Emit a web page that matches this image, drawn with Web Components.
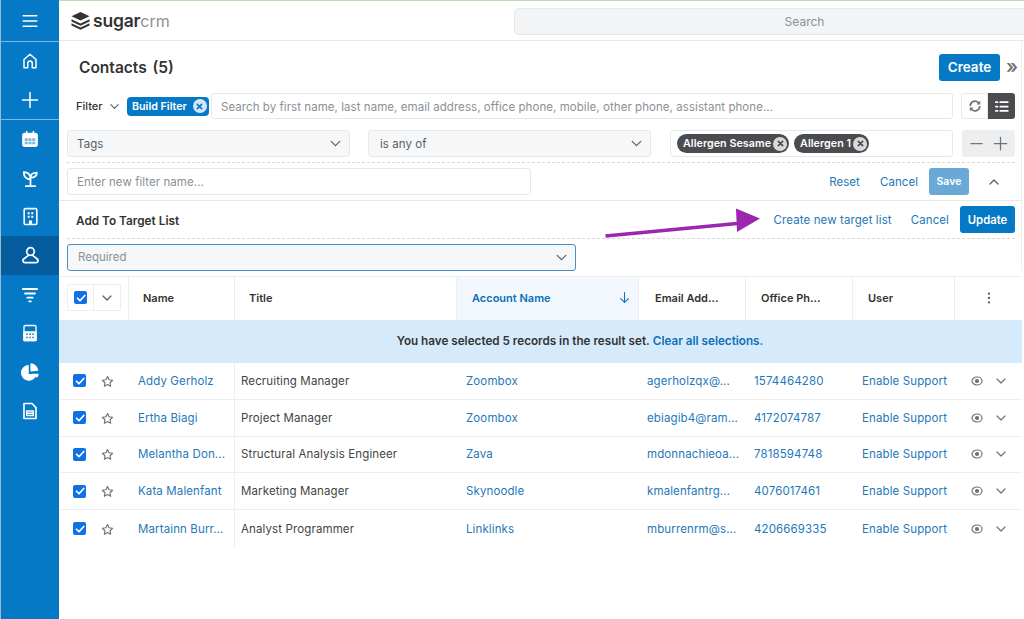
<!DOCTYPE html>
<html>
<head>
<meta charset="utf-8">
<title>Contacts</title>
<style>
html, body { margin: 0; height: 100%; overflow: hidden; background: #fff; font-family: Inter, "Liberation Sans", sans-serif; color: #333; }
body { position: relative; display: flex; height: 619px; }
sugar-main { flex: 1; min-width: 0; }
</style>
</head>
<body>
<sugar-sidebar></sugar-sidebar>
<sugar-main>
  <sugar-topbar></sugar-topbar>
  <sugar-heading>Contacts (5)</sugar-heading>
  <sugar-filter></sugar-filter>
  <sugar-target></sugar-target>
  <sugar-table>
    <contact-row name="Addy Gerholz" job="Recruiting Manager" account="Zoombox" email="agerholzqx@..." phone="1574464280"></contact-row>
    <contact-row name="Ertha Biagi" job="Project Manager" account="Zoombox" email="ebiagib4@ram..." phone="4172074787"></contact-row>
    <contact-row name="Melantha Don..." job="Structural Analysis Engineer" account="Zava" email="mdonnachieoa..." phone="7818594748"></contact-row>
    <contact-row name="Kata Malenfant" job="Marketing Manager" account="Skynoodle" email="kmalenfantrg..." phone="4076017461"></contact-row>
    <contact-row name="Martainn Burr..." job="Analyst Programmer" account="Linklinks" email="mburrenrm@s..." phone="4206669335"></contact-row>
  </sugar-table>
</sugar-main>
<sugar-arrow></sugar-arrow>

<script>
// shared icon paths, 24x24 box
const ICONS = {
  menu: '<path d="M3 5h18M3 12h18M3 19h18"/>',
  home: '<path d="M4 21V10l8-7 8 7v11h-5v-6a3 3 0 0 0-6 0v6z"/>',
  plus: '<path d="M12 2v20M2 12h20"/>',
  calendar: '<rect x="2.500" y="4.500" width="19" height="17" rx="2.500" fill="currentColor"/><path d="M7.500 2v3M16.500 2v3"/><path d="M5 11h4v3.500H5zm5 0h4v3.500h-4zm5 0h4v3.500h-4zM5 15.500h4V19H5zm5 0h4V19h-4zm5 0h4V19h-4z" fill="#7db8e2" stroke="none"/>',
  plant: '<path d="M12 12v9M6 21.500h12M12 13C6.500 13 3.500 9.500 3.500 4 9 4 12 7.500 12 13zM12 11c0-4 3-6.500 8-6.500 0 4-3 6.500-8 6.500z"/>',
  building: '<rect x="4" y="2" width="16" height="20" rx="1.500"/><path d="M8.500 6.500h2.500V9H8.500zm4.500 0h2.500V9H13zm-4.500 4.500h2.500v2.500H8.500zm4.500 0h2.500v2.500H13zM10 22v-5h4v5z" fill="currentColor" stroke="none"/>',
  person: '<circle cx="12" cy="7" r="4.800"/><path d="M9 12c-1 2.200-6.500 3-6.500 6.500A2.500 2.500 0 0 0 5 21h14a2.500 2.500 0 0 0 2.500-2.500c0-3.500-5.500-4.300-6.500-6.500"/>',
  funnel: '<path d="M2.500 4h19M5.500 10h13M8.500 15.500h7M11 20.500h2"/>',
  calc: '<rect x="4" y="2" width="16" height="20" rx="1.500"/><path d="M4 10.500h16V22H4z" fill="currentColor"/><path d="M7 13.500h2M11 13.500h2M15 13.500h2M7 18h2M11 18h2M15 18h2" stroke="#0679c6" stroke-width="2" stroke-linecap="butt"/>',
  pie: '<path d="M10.500 3.500a9.500 9.500 0 1 0 9.500 11h-9.500z" fill="currentColor" stroke="none"/><path d="M12.500 1.500a9.800 9.800 0 0 1 9.500 9l-9.500 1z" fill="currentColor" stroke="none"/><path d="M14 14h8.500a9 9 0 0 1-2 5z" fill="currentColor" stroke="none"/>',
  doc: '<path d="M4 2h10.500L20 7.500V22H4z"/><path d="M7.500 12h9v6h-9zM7.500 15h9" stroke-width="1.800"/>',
  chevron: '<path d="M4 8l8 8 8-8"/>',
  chevronUp: '<path d="M4 16l8-8 8 8"/>',
  refresh: '<path d="M4 11a8 8 0 0 1 14-4.500M20 13a8 8 0 0 1-14 4.500"/><path d="M21 3v6.500h-6.500zM3 21v-6.500h6.500z" fill="currentColor" stroke="none"/>',
  list: '<path d="M10 5h12M10 12h12M10 19h12M3 5h2.500M3 12h2.500M3 19h2.500"/>',
  minus: '<path d="M3 12h18"/>',
  down: '<path d="M12 3v18M5 14l7 7 7-7"/>',
  dots: '<circle cx="12" cy="4.500" r="2" fill="currentColor" stroke="none"/><circle cx="12" cy="12" r="2" fill="currentColor" stroke="none"/><circle cx="12" cy="19.500" r="2" fill="currentColor" stroke="none"/>',
  star: '<path d="M12 2.800l2.900 6 6.500.9-4.700 4.600 1.100 6.500-5.800-3.100-5.800 3.100 1.100-6.500-4.700-4.600 6.500-.9z"/>',
  eye: '<ellipse cx="12" cy="12" rx="10" ry="8"/><circle cx="12" cy="12" r="3" fill="currentColor"/>',
  check: '<path d="M5 12.500l5 5L19.500 7"/>',
  close: '<path d="M8 8l8 8M16 8l-8 8"/>'
};

class SugarIcon extends HTMLElement {
  connectedCallback() {
    const size = this.getAttribute('size') || 16;
    const sw = this.getAttribute('sw') || 2;
    this.attachShadow({ mode: 'open' }).innerHTML = `
      <style>:host { display: inline-flex; line-height: 0; flex: none; } svg { display: block; }</style>
      <svg width="${size}" height="${size}" viewBox="0 0 24 24" fill="none" stroke="currentColor"
        stroke-width="${sw}" stroke-linecap="round" stroke-linejoin="round">${ICONS[this.getAttribute('name')] || ''}</svg>`;
  }
}
customElements.define('sugar-icon', SugarIcon);

class SugarCheck extends HTMLElement {
  connectedCallback() {
    this.attachShadow({ mode: 'open' }).innerHTML = `
      <style>
        :host { display: flex; width: 13px; height: 13px; border-radius: 2px; background: #1070e6; color: #fff;
          align-items: center; justify-content: center; flex: none; }
      </style>
      <sugar-icon name="check" size="12" sw="3.400"></sugar-icon>`;
  }
}
customElements.define('sugar-check', SugarCheck);

class SugarSidebar extends HTMLElement {
  connectedCallback() {
    const item = (n, cls = '', size = 19, sw = 2) =>
      `<div class="item ${cls}"><sugar-icon name="${n}" size="${size}" sw="${sw}"></sugar-icon></div>`;
    this.attachShadow({ mode: 'open' }).innerHTML = `
      <style>
        :host { display: block; width: 58px; height: 619px; flex: none; background: #0679c6; color: #fff;
          border-left: 1px solid #9db9ce; }
        .top { height: 41px; display: flex; align-items: center; justify-content: center; border-bottom: 1px solid #7db8e2; }
        .create { height: 77px; border-bottom: 1px solid #7db8e2; }
        .item { height: 38.800px; display: flex; align-items: center; justify-content: center; }
        .active { background: #045c9f; }
      </style>
      <div class="top"><sugar-icon name="menu" size="18" sw="2"></sugar-icon></div>
      <div class="create">${item('home', '', 18)}${item('plus', '', 18)}</div>
      <div>
        ${item('calendar', '', 18)}${item('plant', '', 19, 2.200)}${item('building', '', 19)}
        ${item('person', 'active', 19, 2.200)}${item('funnel', '', 18, 2.600)}${item('calc', '', 18, 1.800)}
        ${item('pie', '', 20)}${item('doc', '', 18, 2.200)}
      </div>`;
  }
}
customElements.define('sugar-sidebar', SugarSidebar);

class SugarTopbar extends HTMLElement {
  connectedCallback() {
    this.attachShadow({ mode: 'open' }).innerHTML = `
      <style>
        :host { display: flex; height: 41px; box-sizing: border-box; align-items: center; justify-content: space-between;
          border-top: 1px solid #bcdcb4; border-bottom: 1px solid #e6e8ea; padding-left: 12px; }
        .logo { display: flex; align-items: center; gap: 3px; color: #333; }
        .logo b { font-size: 17.500px; font-weight: 600; letter-spacing: -.2px; }
        .logo span { font-size: 16px; color: #8b9095; font-weight: 400; }
        .search { width: 510px; height: 27px; background: #f3f4f5; border: 1px solid #e6e8ea; border-radius: 5px 0 0 5px;
          border-right: 0; box-sizing: border-box; display: flex; align-items: center; justify-content: center;
          font-size: 12px; color: #8b9095; margin-top: 1px; padding-left: 70px; }
      </style>
      <div class="logo">
        <svg width="19" height="19" viewBox="0 0 19 19"><path d="M9.500 1l9 4.200-9 4.200-9-4.200z" fill="#333"/><path d="M.5 8.200l9 4.200 9-4.200v2.300l-9 4.200-9-4.200z" fill="#333"/><path d="M.5 12.300l9 4.200 9-4.200v2.300l-9 4.200-9-4.200z" fill="#333"/></svg>
        <div><b>sugar</b><span>crm</span></div>
      </div>
      <div class="search">Search</div>`;
  }
}
customElements.define('sugar-topbar', SugarTopbar);

class SugarHeading extends HTMLElement {
  connectedCallback() {
    this.attachShadow({ mode: 'open' }).innerHTML = `
      <style>
        :host { display: flex; height: 52px; box-sizing: border-box; align-items: center; justify-content: space-between;
          padding: 0 3px 0 20px; border-right: 1px solid #eceeef; width: 963px; }
        h1 { margin: 0; font-size: 15.500px; font-weight: 600; color: #333; word-spacing: 2px; }
        .right { display: flex; align-items: center; gap: 6px; }
        .create { width: 61px; height: 27px; background: #0679c6; color: #fff; border-radius: 3px; font-size: 13.500px;
          font-weight: 600; display: flex; align-items: center; justify-content: center; }
        .more { color: #6f7478; font-size: 19px; font-weight: 600; line-height: 1; width: 12px; margin-top: -2px; }
      </style>
      <h1><slot></slot></h1>
      <div class="right"><div class="create">Create</div><div class="more">»</div></div>`;
  }
}
customElements.define('sugar-heading', SugarHeading);

class SugarPill extends HTMLElement {
  connectedCallback() {
    this.attachShadow({ mode: 'open' }).innerHTML = `
      <style>
        :host { display: inline-flex; align-items: center; gap: var(--pill-gap, 2px); height: 19px; box-sizing: border-box;
          padding: 0 2px 0 var(--pill-pad, 6px); background: var(--pill-bg, #4a4c50); color: #fff; border-radius: 10px;
          font-size: 10.700px; font-weight: 600; white-space: nowrap; }
        .x { width: 14px; height: 14px; border-radius: 50%; background: var(--x-bg, #d8dadc); color: var(--pill-bg, #4a4c50);
          display: flex; align-items: center; justify-content: center; }
      </style>
      <slot></slot><span class="x"><sugar-icon name="close" size="13" sw="3"></sugar-icon></span>`;
  }
}
customElements.define('sugar-pill', SugarPill);

class SugarFilter extends HTMLElement {
  connectedCallback() {
    this.attachShadow({ mode: 'open' }).innerHTML = `
      <style>
        :host { display: block; width: 963px; box-sizing: border-box; border-right: 1px solid #eceeef; border-bottom: 1px solid #e6e8ea;
          padding: 0 8px; height: 108px; font-size: 11.500px; color: #4a4c50; }
        .row { display: flex; align-items: center; }
        .one { height: 26px; padding-left: 9px; margin-bottom: 11px; }
        .filter { font-size: 11px; font-weight: 500; color: #333; width: 33px; }
        .chev { color: #5a5e62; display: flex; }
        .build { --pill-bg: #0679c6; --x-bg: #d3e8f7; --pill-gap: 6px; --pill-pad: 5px; margin-left: 7px; border-radius: 4px; height: 19px; }
        .box { border: 1px solid #e6e8ea; border-radius: 3px; box-sizing: border-box; display: flex; align-items: center;
          padding: 0 9px; color: #8b9095; background: #fff; white-space: nowrap; overflow: hidden; letter-spacing: .06px; }
        .search { width: 742px; height: 26px; margin-left: auto; padding-top: 1px; }
        .sync { width: 27px; height: 26px; margin-left: 8px; border: 1px solid #e6e8ea; border-radius: 3px 0 0 3px; box-sizing: border-box;
          display: flex; align-items: center; justify-content: center; color: #6f7478; }
        .list { width: 27px; height: 26px; background: #4a4c50; color: #fff; border-radius: 0 3px 3px 0; display: flex; align-items: center; justify-content: center; }
        .two { height: 27px; padding-bottom: 5px; border-bottom: 1px dashed #d5d7d9; width: 948px; }
        .select { background: #f6f7f8; justify-content: space-between; color: #5a5e62; height: 27px; padding-right: 7px; }
        .tags { width: 283px; }
        .op { width: 283px; margin-left: 18px; padding-left: 11px; }
        .pills { width: 283px; margin-left: 19px; padding: 0 6px; gap: 5px; overflow: visible; height: 27px; }
        .plusminus { width: 53px; height: 27px; margin-left: 9px; background: #eceeef; border-radius: 3px; display: flex; align-items: center;
          justify-content: space-around; color: #6f7478; padding: 0 2px; box-sizing: border-box; }
        .three { height: 27px; margin-top: 5px; width: 948px; }
        .name { width: 464px; height: 27px; }
        .actions { margin-left: auto; display: flex; align-items: center; color: #2578b8; letter-spacing: .06px; }
        .actions span { margin-right: 20px; }
        .save { width: 40px; height: 27px; background: #6aa8d8; color: #fff; border-radius: 3px; font-size: 10.500px; font-weight: 600;
          display: flex; align-items: center; justify-content: center; }
        .up { width: 49px; display: flex; justify-content: center; color: #5a5e62; margin-right: -3px; }
      </style>
      <div class="row one" style="width:948px;box-sizing:border-box">
        <span class="filter">Filter</span>
        <span class="chev"><sugar-icon name="chevron" size="11" sw="2.400"></sugar-icon></span>
        <sugar-pill class="build">Build Filter</sugar-pill>
        <div class="box search">Search by first name, last name, email address, office phone, mobile, other phone, assistant phone...</div>
        <div class="sync"><sugar-icon name="refresh" size="14" sw="3"></sugar-icon></div>
        <div class="list"><sugar-icon name="list" size="15" sw="2.800"></sugar-icon></div>
      </div>
      <div class="row two">
        <div class="box select tags">Tags <sugar-icon name="chevron" size="13" sw="2.200"></sugar-icon></div>
        <div class="box select op">is any of <sugar-icon name="chevron" size="13" sw="2.200"></sugar-icon></div>
        <div class="box pills"><sugar-pill>Allergen Sesame</sugar-pill><sugar-pill>Allergen 1</sugar-pill></div>
        <div class="plusminus"><sugar-icon name="minus" size="15"></sugar-icon><sugar-icon name="plus" size="15"></sugar-icon></div>
      </div>
      <div class="row three">
        <div class="box name">Enter new filter name...</div>
        <div class="actions">
          <span>Reset</span><span style="margin-right:11px">Cancel</span>
          <div class="save">Save</div>
          <div class="up"><sugar-icon name="chevronUp" size="12" sw="2.600"></sugar-icon></div>
        </div>
      </div>`;
  }
}
customElements.define('sugar-filter', SugarFilter);

class SugarTarget extends HTMLElement {
  connectedCallback() {
    this.attachShadow({ mode: 'open' }).innerHTML = `
      <style>
        :host { display: block; width: 963px; box-sizing: border-box; border-right: 1px solid #eceeef; padding: 0 6px 0 8px; font-size: 11.500px; }
        .bar { height: 37px; border-bottom: 1px dashed #d5d7d9; display: flex; align-items: center; padding: 0 0 0 9px; }
        b { font-size: 11.800px; font-weight: 600; color: #333; margin-top: 2px; }
        .links { margin-left: auto; display: flex; align-items: center; color: #2578b8; }
        .links span { margin-right: 19px; letter-spacing: .1px; }
        .links span + span { margin-right: 11px; }
        .update { width: 55px; height: 27px; background: #0679c6; color: #fff; border-radius: 3px; font-size: 11.300px; font-weight: 600;
          display: flex; align-items: center; justify-content: center; }
        .req { display: flex; justify-content: space-between; align-items: center; width: 509px; height: 27px; box-sizing: border-box; margin-top: 5px;
          border: 1px solid #4a8fc4; border-radius: 3px; background: #f6f7f8; color: #8b9095; padding: 0 7px 1px 10px; }
        .req sugar-icon { color: #5a5e62; }
      </style>
      <div class="bar">
        <b>Add To Target List</b>
        <div class="links"><span>Create new target list</span><span>Cancel</span><div class="update">Update</div></div>
      </div>
      <div class="req">Required <sugar-icon name="chevron" size="13" sw="2.200"></sugar-icon></div>`;
  }
}
customElements.define('sugar-target', SugarTarget);

const COLS = '70px 106px 222px 182px 107px 107px 102px 67px';

class SugarTable extends HTMLElement {
  connectedCallback() {
    this.attachShadow({ mode: 'open' }).innerHTML = `
      <style>
        :host { display: block; width: 963px; margin-top: 5px; border-top: 1px solid #eceeef; font-size: 12px; }
        .head { display: grid; grid-template-columns: ${COLS}; height: 43px; font-size: 11px; font-weight: 600; color: #333; }
        .head > div { display: flex; align-items: center; padding-left: 9px; padding-bottom: 2px; border-right: 1px solid #eceeef; box-sizing: border-box; min-width: 0; }
        .head .name { padding-left: 14px; }
        .head .title { padding-left: 14px; }
        .head .acct { background: #f2f8fd; color: #0f6fb8; justify-content: space-between; padding: 0 7px 2px 15px; }
        .head .email { padding-left: 16px; }
        .head .phone { padding-left: 15px; }
        .head .user { padding-left: 15px; }
        .head .dots { padding: 0 0 2px; justify-content: center; border-right: 0; color: #5a5e62; }
        .head .sel { padding: 0 0 2px 8px; }
        .group { width: 54px; height: 27px; border: 1px solid #eceeef; border-radius: 2px; box-sizing: border-box; display: flex; align-items: center; }
        .group > div { width: 27px; height: 100%; display: flex; align-items: center; justify-content: center; box-sizing: border-box; }
        .group > div:first-child { border-right: 1px solid #eceeef; }
        .group sugar-icon { color: #5a5e62; }
        .banner { height: 43px; box-sizing: border-box; padding: 0 0 1px 79px; background: #d5eafb; display: flex; align-items: center; justify-content: center;
          font-size: 11.700px; font-weight: 600; color: #333; gap: 3px; white-space: nowrap; }
        .banner span { color: #0f6fb8; }
      </style>
      <div class="head">
        <div class="sel"><div class="group"><div><sugar-check></sugar-check></div><div><sugar-icon name="chevron" size="12" sw="2.400"></sugar-icon></div></div></div>
        <div class="name">Name</div><div class="title">Title</div>
        <div class="acct">Account Name <sugar-icon name="down" size="13" sw="2"></sugar-icon></div>
        <div class="email">Email Add...</div><div class="phone">Office Ph...</div><div class="user">User</div>
        <div class="dots"><sugar-icon name="dots" size="14"></sugar-icon></div>
      </div>
      <div class="banner">You have selected 5 records in the result set. <span>Clear all selections.</span></div>
      <slot></slot>`;
  }
}
customElements.define('sugar-table', SugarTable);

class ContactRow extends HTMLElement {
  connectedCallback() {
    const a = n => this.getAttribute(n);
    this.attachShadow({ mode: 'open' }).innerHTML = `
      <style>
        :host { display: grid; grid-template-columns: ${COLS}; height: 36.800px; box-sizing: border-box; border-bottom: 1px solid #eceeef;
          color: #2578b8; font-size: 11.500px; letter-spacing: .12px; }
        :host(:last-child) { border-bottom: 0; }
        div { display: flex; align-items: center; white-space: nowrap; min-width: 0; }
        .sel { gap: 15px; padding-left: 14px; color: #6f7478; }
        .sel sugar-icon { margin-top: 1px; }
        .name { padding-left: 9px; border-right: 1px solid #eceeef; }
        .job { padding-left: 6px; color: #444; }
        .acct { padding-left: 9px; }
        .email { padding-left: 8px; }
        .phone { padding-left: 8px; }
        .user { padding-left: 9px; }
        .acts { gap: 12px; padding-left: 16px; color: #6f7478; }
      </style>
      <div class="sel"><sugar-check></sugar-check><sugar-icon name="star" size="13" sw="2.200"></sugar-icon></div>
      <div class="name">${a('name')}</div>
      <div class="job">${a('job')}</div>
      <div class="acct">${a('account')}</div>
      <div class="email">${a('email')}</div>
      <div class="phone">${a('phone')}</div>
      <div class="user">Enable Support</div>
      <div class="acts"><sugar-icon name="eye" size="12" sw="2.400"></sugar-icon><sugar-icon name="chevron" size="12" sw="2.400"></sugar-icon></div>`;
  }
}
customElements.define('contact-row', ContactRow);

// annotation drawn over the page
class SugarArrow extends HTMLElement {
  connectedCallback() {
    this.attachShadow({ mode: 'open' }).innerHTML = `
      <style>:host { position: absolute; left: 600px; top: 205px; width: 170px; height: 36px; pointer-events: none; } svg { display: block; }</style>
      <svg width="170" height="36" viewBox="0 0 170 36"><path d="M5.500 31L137 18.500" stroke="#9b27b0" stroke-width="3.500"/><path d="M136 3.500L160 13.500 137 27z" fill="#9b27b0"/></svg>`;
  }
}
customElements.define('sugar-arrow', SugarArrow);
</script>
</body>
</html>
